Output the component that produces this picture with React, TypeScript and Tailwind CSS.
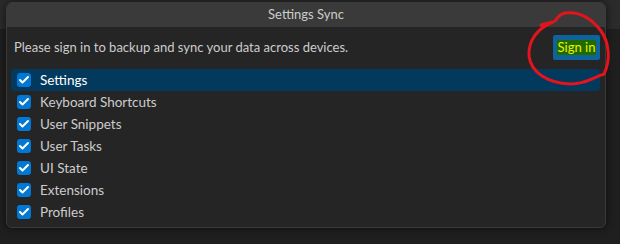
import { Check } from 'lucide-react'

const items = [
  'Settings',
  'Keyboard Shortcuts',
  'User Snippets',
  'User Tasks',
  'UI State',
  'Extensions',
  'Profiles',
]

export default function App() {
  return (
    <div className="relative w-[620px] h-[244px] overflow-hidden bg-[#1f1f1f] font-['Lato',sans-serif]">
      {/* window chrome behind the dialog */}
      <div className="h-[29px] bg-[#2b2b2b]" />

      {/* Settings Sync quick pick */}
      <div className="absolute left-[6px] top-[2px] w-[600px] h-[226px] rounded-md border border-[#3a3a3a] bg-[#252526] shadow-[0_0_8px_rgba(0,0,0,0.6)] overflow-hidden">
        <div className="h-[24px] bg-[#3a3a3a] flex items-center justify-center text-[13px] text-[#cccccc]">
          Settings Sync
        </div>

        <div className="flex items-center justify-between pl-[7px] pr-[5px] mt-[8px] h-[25px]">
          <span className="text-[13px] text-[#cccccc]">Please sign in to backup and sync your data across devices.</span>
          <button className="h-[25px] w-[47px] rounded-[2px] bg-[#0e639c] flex items-center justify-center">
            <span className="text-[13px] leading-[15px] text-[#f0f000] bg-[#1f6b00] px-[1px]">Sign in</span>
          </button>
        </div>

        <div className="mt-[9px] pl-[4px] pr-[5px] flex flex-col">
          {items.map((item, i) => (
            <div
              key={item}
              className={`h-[22px] flex items-center gap-[9px] pl-[6px] rounded-[3px] ${i === 0 ? 'bg-[#04395e] text-white' : 'text-[#cccccc]'}`}
            >
              <div className="w-[14px] h-[14px] rounded-[3px] bg-[#0078d4] flex items-center justify-center">
                <Check size={12} strokeWidth={4} className="text-white" />
              </div>
              <span className="text-[13.5px]">{item}</span>
            </div>
          ))}
        </div>
      </div>

      {/* red annotation circle */}
      <svg className="absolute left-0 top-0 pointer-events-none" width="620" height="244">
        <path
          d="M541 25 L553 22 C538 28, 528 40, 529 56 C531 73, 548 83, 570 84 C585 84, 592 78, 604 74 C611 60, 609 42, 601 31 C592 19, 580 11, 565 13 C560 14, 557 18, 555 21"
          fill="none"
          stroke="#e3141b"
          strokeWidth="3"
          strokeLinecap="round"
          strokeLinejoin="round"
        />
      </svg>
    </div>
  )
}
